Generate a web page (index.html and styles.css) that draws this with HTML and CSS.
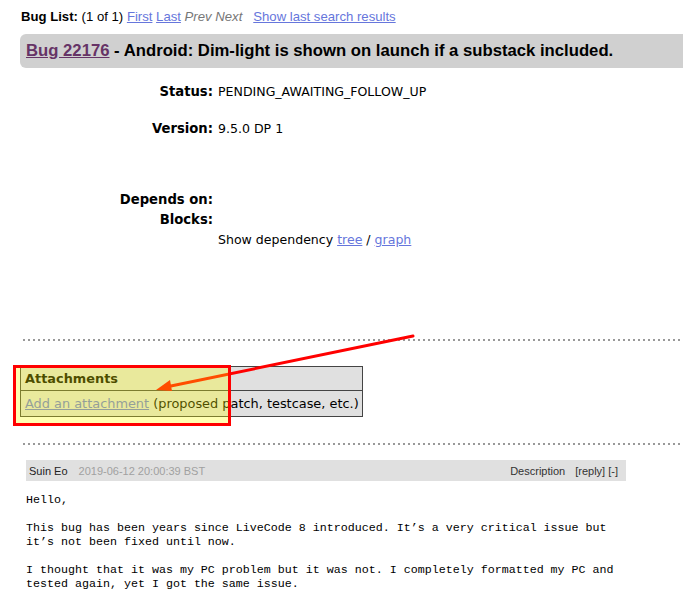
FILE: index.html
```html
<!DOCTYPE html>
<html>
<head>
<meta charset="utf-8">
<link rel="stylesheet" href="styles.css">
</head>
<body>
<div class="page">
  <div class="navline">
    <b>Bug List:</b> (1 of 1) <a href="#">First</a> <a href="#">Last</a> <i class="off">Prev</i> <i class="off">Next</i> &nbsp;&nbsp;<a href="#">Show last search results</a>
  </div>
  <div class="titlebar">
    <a class="buglink" href="#">Bug 22176</a>&nbsp;- Android: Dim-light is shown on launch if a substack included.
  </div>
  <div class="fields">
    <div class="row r-status"><div class="lbl">Status:</div><div class="val">PENDING_AWAITING_FOLLOW_UP</div></div>
    <div class="row r-version"><div class="lbl">Version:</div><div class="val">9.5.0 DP 1</div></div>
    <div class="row r-depends"><div class="lbl">Depends on:</div><div class="val"></div></div>
    <div class="row r-blocks"><div class="lbl">Blocks:</div><div class="val"></div></div>
    <div class="row r-show"><div class="lbl"></div><div class="val">Show dependency <a href="#">tree</a> / <a href="#">graph</a></div></div>
  </div>
  <div class="spacer sp1"></div>
  <table class="attach">
    <tr><th>Attachments</th></tr>
    <tr><td><a href="#" class="addlink">Add an attachment</a> (proposed patch, testcase, etc.)</td></tr>
  </table>
  <div class="spacer sp2"></div>
  <div class="comment">
    <div class="chead">
      <div class="who"><span class="name">Suin Eo</span><span class="date">2019-06-12 20:00:39 BST</span></div>
      <div class="acts"><span class="desc">Description</span><span>[reply] [-]</span></div>
    </div>
    <pre class="ctext">Hello,

This bug has been years since LiveCode 8 introduced. It’s a very critical issue but
it’s not been fixed until now.

I thought that it was my PC problem but it was not. I completely formatted my PC and
tested again, yet I got the same issue.</pre>
  </div>
</div>
<svg class="annot" width="683" height="604" viewBox="0 0 683 604">
  <line x1="413" y1="336" x2="166" y2="387" stroke="#ff0000" stroke-width="3" stroke-linecap="round"/>
  <polygon points="156,390 170,380 172,391" fill="#ff0000"/>
  <rect x="14.5" y="366.5" width="215" height="58" fill="rgba(255,255,0,0.3)" stroke="#ff0000" stroke-width="3"/>
</svg>
</body>
</html>
```
FILE: styles.css
```css
html, body {
  margin: 0;
  padding: 0;
  background: #ffffff;
}
body {
  font-family: "DejaVu Sans", sans-serif;
  font-size: 12.55px;
  color: #000;
  width: 683px;
  height: 604px;
  overflow: hidden;
  position: relative;
}
.page {
  display: flex;
  flex-direction: column;
}
a {
  color: #6676dc;
}
.navline {
  font-family: "Liberation Sans", Arial, sans-serif;
  font-size: 13.15px;
  line-height: 14px;
  padding: 10px 0 0 21px;
  height: 24px;
  white-space: nowrap;
}
.navline .off {
  color: #777;
}
.titlebar {
  margin-left: 20px;
  height: 34px;
  background: #d0d0d0;
  border-radius: 6px 0 0 6px;
  display: flex;
  align-items: center;
  padding-left: 6px;
  font-family: "Liberation Sans", Arial, sans-serif;
  font-weight: bold;
  font-size: 16.7px;
  white-space: nowrap;
}
.buglink {
  color: #663366;
}
.fields {
  display: flex;
  flex-direction: column;
  margin-top: 14px;
}
.row {
  display: grid;
  grid-template-columns: 213px 1fr;
  column-gap: 5px;
  height: 20px;
  line-height: 20px;
}
.lbl {
  text-align: right;
  font-weight: bold;
  font-size: 13.2px;
}
.r-version { margin-top: 17px; }
.r-depends { margin-top: 51px; }
.spacer {
  margin-left: 23px;
  height: 2px;
  background: repeating-linear-gradient(to right, #999 0 2px, transparent 2px 5px);
}
.sp1 { margin-top: 89px; }
.attach {
  margin: 25px 0 0 20px;
  width: 343px;
  border-collapse: collapse;
  border: 1px solid #444;
  background: #e0e0e0;
  font-size: 12.9px;
  white-space: nowrap;
}
.attach th, .attach td {
  text-align: left;
  padding: 0 3px 0 4px;
  border: 1px solid #444;
}
.attach th {
  height: 23px;
  font-weight: bold;
}
.attach td {
  height: 25px;
}
.sp2 { margin-top: 26px; }
.comment {
  margin: 15px 0 0 26px;
  width: 600px;
}
.chead {
  height: 21px;
  background: #e0e0e0;
  display: flex;
  justify-content: space-between;
  align-items: center;
  font-family: "Liberation Sans Narrow", "Liberation Sans", sans-serif;
  font-stretch: condensed;
  font-size: 11px;
  color: #333;
  padding: 0 8px 0 3px;
}
.name { color: #222; }
.date { color: #a0a0a0; margin-left: 11px; }
.desc { margin-right: 10px; }
.ctext {
  margin: 12px 0 0 0;
  font-family: "Liberation Mono", monospace;
  font-size: 11.67px;
  line-height: 14px;
}
.annot {
  position: absolute;
  left: 0;
  top: 0;
  pointer-events: none;
}
```
